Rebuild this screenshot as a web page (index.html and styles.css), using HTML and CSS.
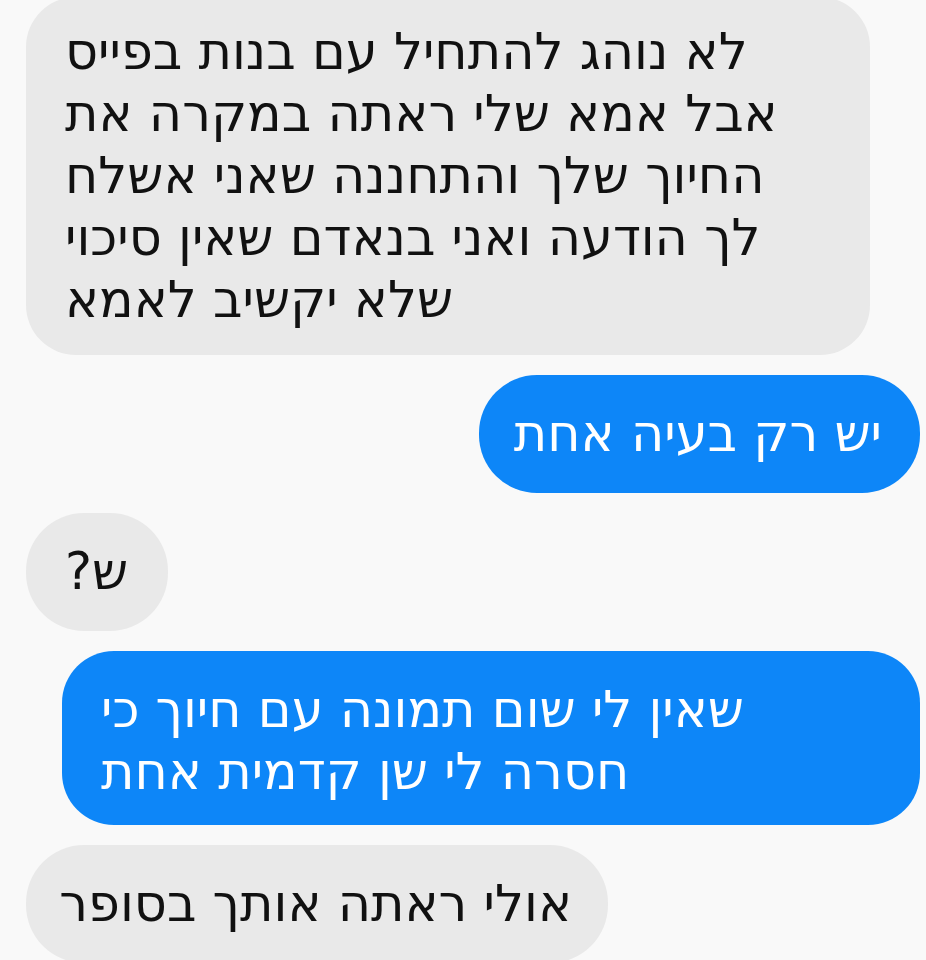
FILE: index.html
```html
<!DOCTYPE html>
<html lang="he">
<head>
<meta charset="utf-8">
<link rel="stylesheet" href="styles.css">
</head>
<body>
<div class="thread">
  <div class="bubble in b1">
    <div class="line" dir="rtl">לא נוהג להתחיל עם בנות בפייס</div>
    <div class="line" dir="rtl">אבל אמא שלי ראתה במקרה את</div>
    <div class="line" dir="rtl">החיוך שלך והתחננה שאני אשלח</div>
    <div class="line" dir="rtl">לך הודעה ואני בנאדם שאין סיכוי</div>
    <div class="line" dir="rtl">שלא יקשיב לאמא</div>
  </div>
  <div class="bubble out b2">
    <div class="line" dir="rtl">יש רק בעיה אחת</div>
  </div>
  <div class="bubble in b3">
    <div class="line" dir="rtl">ש?</div>
  </div>
  <div class="bubble out b4">
    <div class="line" dir="rtl">שאין לי שום תמונה עם חיוך כי</div>
    <div class="line" dir="rtl">חסרה לי שן קדמית אחת</div>
  </div>
  <div class="bubble in b5">
    <div class="line" dir="rtl">אולי ראתה אותך בסופר</div>
  </div>
</div>
</body>
</html>
```
FILE: styles.css
```css
html, body {
  margin: 0;
  padding: 0;
  background: #f9f9f9;
  height: 960px;
  overflow: hidden;
}
.thread {
  display: flex;
  flex-direction: column;
  gap: 20px;
  margin-top: -3px;
  font-family: "DejaVu Sans", sans-serif;
  font-size: 51px;
  line-height: 62px;
}
.bubble {
  box-sizing: border-box;
  padding: 28px 39px;
  border-radius: 58px;
}
.line {
  text-align: left;
  white-space: nowrap;
}
.in {
  align-self: flex-start;
  margin-left: 26px;
  background: #e9e9e9;
  color: #111;
}
.out {
  align-self: flex-end;
  margin-right: 6px;
  background: #0d86f8;
  color: #fff;
}
.b1 {
  width: 844px;
  border-radius: 50px;
  padding: 24px 39px 24px;
}
.b2 {
  padding-left: 35px;
  padding-right: 38px;
}
.b3 {
  padding-right: 40px;
}
.b4 {
  width: 858px;
  border-radius: 52px;
  padding: 28px 39px 22px;
}
.b5 {
  width: 582px;
  padding-left: 36px;
  padding-right: 36px;
}
```
